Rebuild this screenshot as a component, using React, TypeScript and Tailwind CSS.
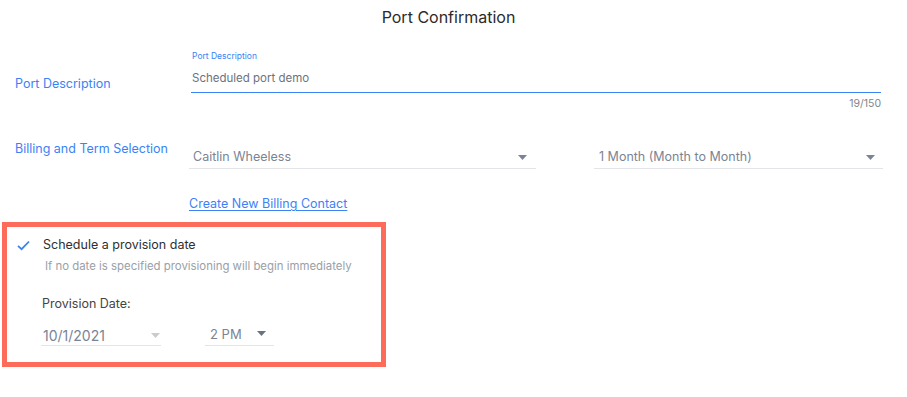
import React from "react";

const Caret = ({ color = "#7b8494" }: { color?: string }) => (
  <svg width="9" height="5" viewBox="0 0 9 5">
    <path d="M0 0 L9 0 L4.5 5 Z" fill={color} />
  </svg>
);

export default function App() {
  return (
    <div
      className="w-[907px] h-[397px] bg-white overflow-hidden text-[#333]"
      style={{ fontFamily: "Inter, 'Noto Sans', sans-serif" }}
    >
      {/* Title */}
      <div className="pt-[7px] pr-[10px] h-[45px] text-center text-[16px] leading-[20px] text-[#2b2b2b]">
        Port Confirmation
      </div>

      {/* Row 1 */}
      <div className="flex">
        <div className="w-[191px] pl-[15px] pt-[31px] text-[12.5px] leading-[16px] text-[#3b82f6]">
          Port Description
        </div>
        <div className="w-[690px]">
          <div className="pt-[5px] pl-[1px] text-[8.5px] leading-[12px] text-[#3b82f6]">Port Description</div>
          <div className="pt-[7px] pl-[1px] text-[11.5px] leading-[18px] text-[#6b7280] h-[31px] border-b border-[#3b82f6]">
            Scheduled port demo
          </div>
          <div className="text-right text-[10.5px] leading-[14px] pt-[4px] text-[#80868b]">19/150</div>
        </div>
      </div>

      {/* Row 2 */}
      <div className="flex mt-[29px]">
        <div className="w-[189px] pl-[15px] pt-[1px] text-[12.5px] leading-[16px] text-[#3b82f6]">
          Billing and Term Selection
        </div>
        <div className="w-[347px] h-[29px] border-b border-[#e2e4e8] flex items-center justify-between pl-[4px] pr-[9px] pt-[6px]">
          <span className="text-[12.5px] text-[#7b8494]">Caitlin Wheeless</span>
          <Caret />
        </div>
        <div className="w-[58px]" />
        <div className="w-[289px] h-[29px] border-b border-[#e2e4e8] flex items-center justify-between pl-[5px] pr-[8px] pt-[6px]">
          <span className="text-[12.5px] text-[#7b8494]">1 Month (Month to Month)</span>
          <Caret />
        </div>
      </div>

      {/* Link */}
      <div className="pl-[189px] mt-[27px] text-[12.5px] leading-[16px]">
        <span className="text-[#3b82f6] underline underline-offset-2">Create New Billing Contact</span>
      </div>

      {/* Provision box */}
      <div className="ml-[2px] mt-[10px] w-[384px] h-[145px] border-[5px] border-[#fd6b5a] pl-[10px] pt-[10px]">
        <div className="flex items-center h-[16px]">
          <svg width="13" height="11" viewBox="0 0 13 11">
            <path d="M1 5.8 L4.6 9.2 L12 1.5" stroke="#3b82f6" strokeWidth="1.8" fill="none" />
          </svg>
          <span className="ml-[13px] text-[12.5px] text-[#2f2f2f]">Schedule a provision date</span>
        </div>
        <div className="pl-[28px] mt-[6px] text-[11.4px] leading-[14px] text-[#9aa0a6]">
          If no date is specified provisioning will begin immediately
        </div>
        <div className="pl-[25px] mt-[23px] text-[12.5px] leading-[16px] text-[#444]">Provision Date:</div>
        <div className="flex pl-[24px] mt-[14px]">
          <div className="w-[120px] h-[20px] border-b border-[#e2e4e8] flex justify-between items-start pl-[2px] pr-[1px]">
            <span className="text-[14px] leading-[20px] text-[#7b8494]">10/1/2021</span>
            <span className="pt-[7px]"><Caret color="#c9cbcf" /></span>
          </div>
          <div className="w-[44px]" />
          <div className="w-[69px] h-[20px] border-b border-[#e2e4e8] flex justify-between items-start pl-[5px] pr-[8px]">
            <span className="text-[13px] leading-[16px] text-[#7b8494]">2 PM</span>
            <span className="pt-[5px]"><Caret color="#6b7280" /></span>
          </div>
        </div>
      </div>
    </div>
  );
}
